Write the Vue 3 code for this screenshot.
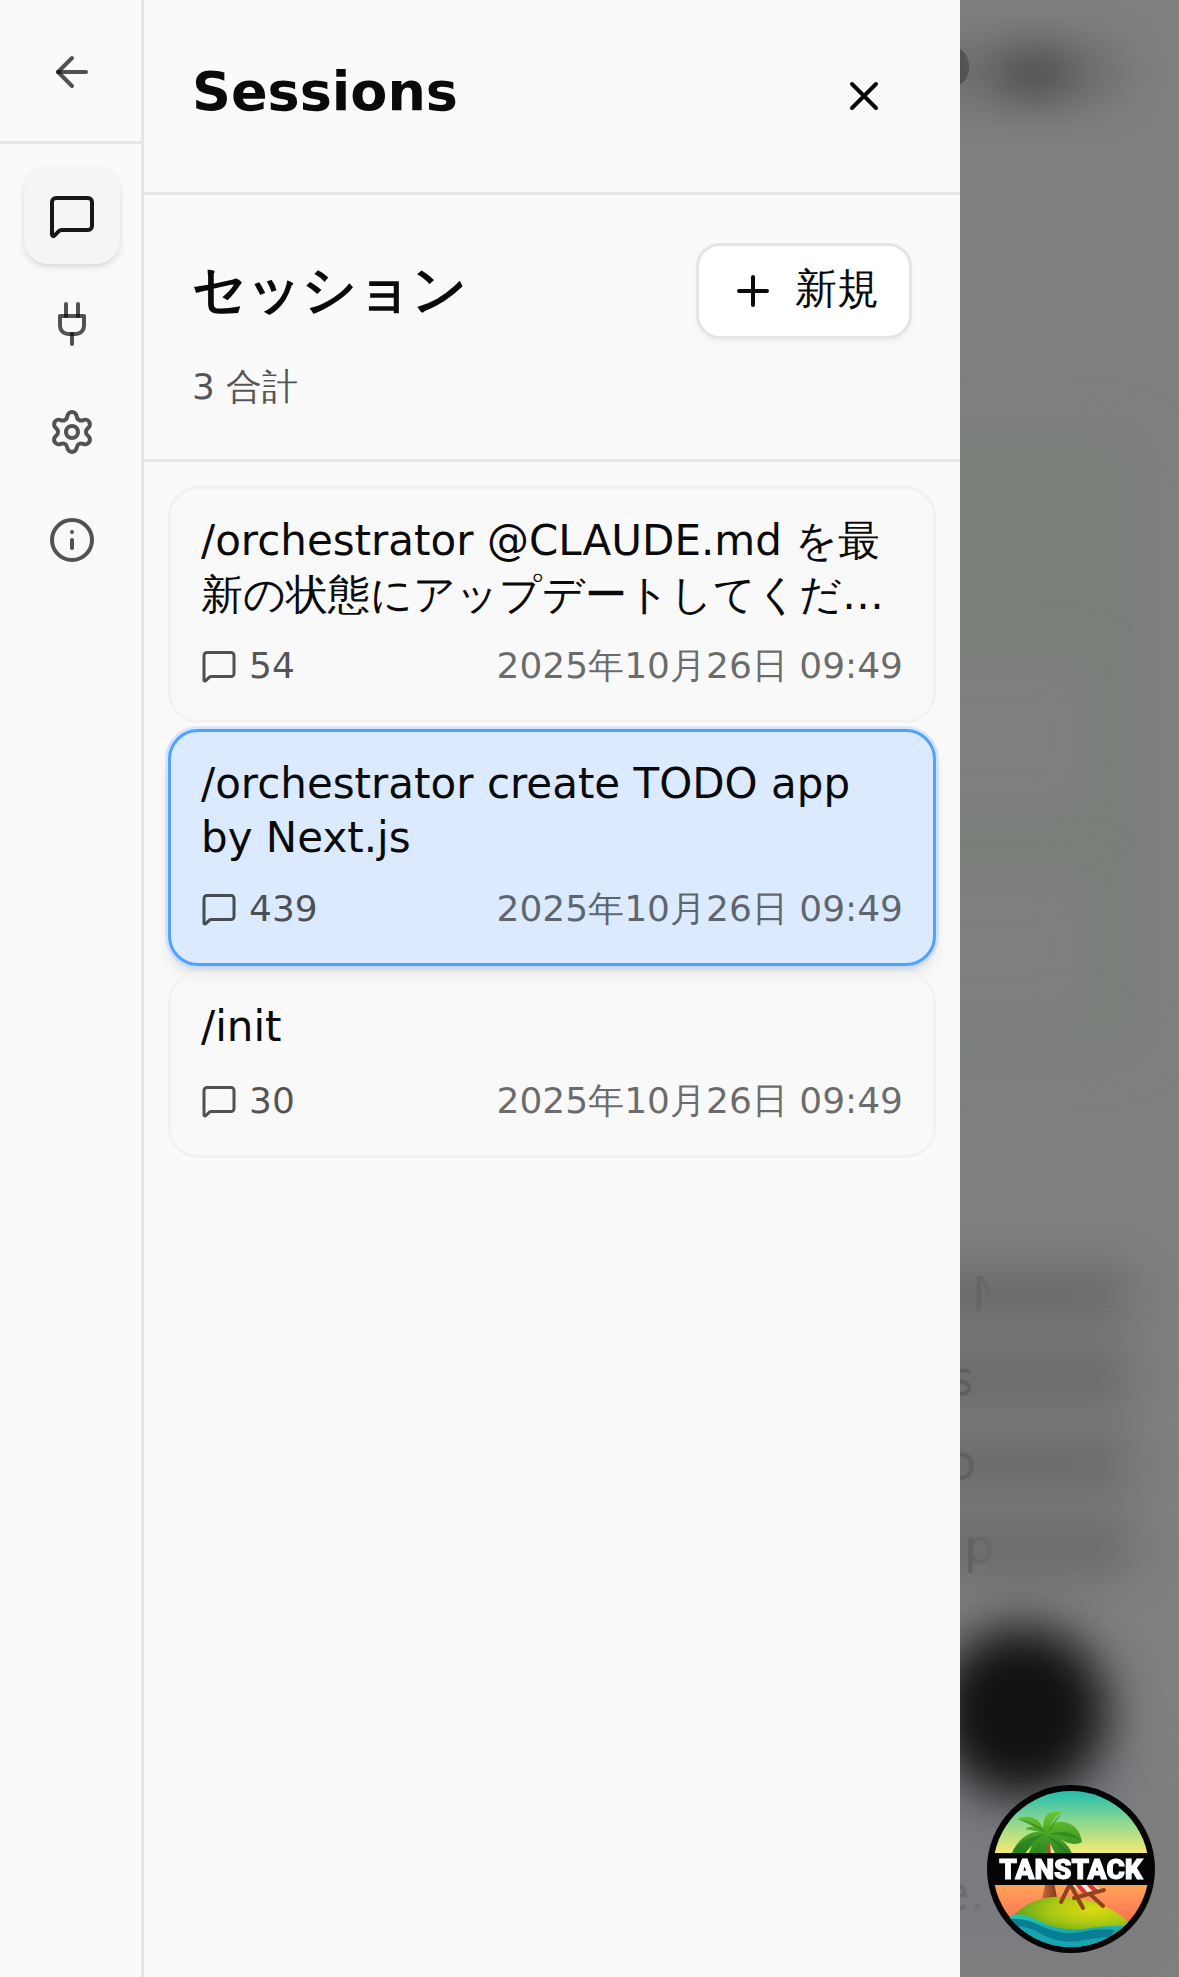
<script setup>
import { ref } from 'vue'

const bubble = 'M22 17a2 2 0 0 1-2 2H6.828a2 2 0 0 0-1.414.586l-2.202 2.202A.71.71 0 0 1 2 21.286V5a2 2 0 0 1 2-2h16a2 2 0 0 1 2 2z'

const tabs = [
  { id: 'sessions', label: 'Sessions', paths: [bubble] },
  {
    id: 'mcp',
    label: 'MCP',
    paths: ['M12 22v-5', 'M9 8V2', 'M15 8V2', 'M18 8v5a4 4 0 0 1-4 4h-4a4 4 0 0 1-4-4V8Z']
  },
  {
    id: 'settings',
    label: 'Settings',
    paths: [
      'M9.671 4.136a2.34 2.34 0 0 1 4.659 0 2.34 2.34 0 0 0 3.319 1.915 2.34 2.34 0 0 1 2.33 4.033 2.34 2.34 0 0 0 0 3.831 2.34 2.34 0 0 1-2.33 4.033 2.34 2.34 0 0 0-3.319 1.915 2.34 2.34 0 0 1-4.659 0 2.34 2.34 0 0 0-3.32-1.915 2.34 2.34 0 0 1-2.33-4.033 2.34 2.34 0 0 0 0-3.831A2.34 2.34 0 0 1 6.35 6.051a2.34 2.34 0 0 0 3.319-1.915',
      'M15 12a3 3 0 1 1-6 0 3 3 0 0 1 6 0Z'
    ]
  },
  {
    id: 'info',
    label: 'Info',
    paths: ['M22 12a10 10 0 1 1-20 0 10 10 0 0 1 20 0Z', 'M12 16v-4', 'M12 8h.01']
  }
]
const activeTab = ref('sessions')

const sessions = [
  { id: 1, title: '/orchestrator @CLAUDE.md を最新の状態にアップデートしてくだ…', count: 54, date: '2025年10月26日 09:49' },
  { id: 2, title: '/orchestrator create TODO app by Next.js', count: 439, date: '2025年10月26日 09:49' },
  { id: 3, title: '/init', count: 30, date: '2025年10月26日 09:49' }
]
const current = ref(2)
</script>

<template>
  <div class="app">
    <div class="drawer">
      <nav class="rail">
        <div class="rail-top">
          <a class="rail-btn" href="#" aria-label="Back">
            <svg class="icon" viewBox="0 0 24 24"><path d="m12 19-7-7 7-7" /><path d="M19 12H5" /></svg>
          </a>
        </div>
        <div class="rail-tabs">
          <button
            v-for="tab in tabs"
            :key="tab.id"
            type="button"
            class="rail-btn"
            :class="{ active: tab.id === activeTab }"
            :aria-label="tab.label"
            @click="activeTab = tab.id"
          >
            <svg class="icon" viewBox="0 0 24 24"><path v-for="d in tab.paths" :key="d" :d="d" /></svg>
          </button>
        </div>
      </nav>

      <section class="panel">
        <header class="panel-head">
          <h1>Sessions</h1>
          <button type="button" class="close" aria-label="Close">
            <svg class="icon" viewBox="0 0 24 24"><path d="M18 6 6 18M6 6l12 12" /></svg>
          </button>
        </header>

        <div class="summary">
          <div class="summary-row">
            <h2>セッション</h2>
            <button type="button" class="new">
              <svg class="icon" viewBox="0 0 24 24"><path d="M5 12h14M12 5v14" /></svg>
              <span>新規</span>
            </button>
          </div>
          <p class="total">3 合計</p>
        </div>

        <div class="list">
          <a
            v-for="s in sessions"
            :key="s.id"
            href="#"
            class="card"
            :class="{ selected: s.id === current }"
            @click.prevent="current = s.id"
          >
            <h3>{{ s.title }}</h3>
            <div class="meta">
              <span class="count">
                <svg class="icon small" viewBox="0 0 24 24"><path :d="bubble" /></svg>
                {{ s.count }}
              </span>
              <time>{{ s.date }}</time>
            </div>
          </a>
        </div>
      </section>
    </div>

    <div class="backdrop" aria-hidden="true">
      <div class="blob title-soft"></div>
      <div class="blob title-core"></div>
      <div class="blob green"></div>
      <div class="blob field field-a"></div>
      <div class="blob field field-b"></div>
      <div class="blob line line-a"></div>
      <div class="blob line line-b"></div>
      <div class="blob line line-c"></div>
      <div class="blob line line-d"></div>
      <div class="blob cool"></div>
      <div class="blob disc"></div>
      <div class="ghosts">
        <span class="ghost ghost-title">O</span>
        <span class="ghost ghost-a">N</span>
        <span class="ghost ghost-b">s</span>
        <span class="ghost ghost-c">o</span>
        <span class="ghost ghost-d">p</span>
        <span class="ghost ghost-e">e.</span>
      </div>
    </div>

    <button type="button" class="devtools" aria-label="TanStack Devtools">
      <svg viewBox="0 0 168 168">
        <defs>
          <linearGradient id="sky" x1="0" y1="0" x2="0" y2="1">
            <stop offset="0" stop-color="#22bdb0" />
            <stop offset=".5" stop-color="#8ed88e" />
            <stop offset="1" stop-color="#f8ea72" />
          </linearGradient>
          <linearGradient id="dusk" x1="0" y1="0" x2="0" y2="1">
            <stop offset="0" stop-color="#ffa65c" />
            <stop offset=".55" stop-color="#ff7050" />
            <stop offset="1" stop-color="#ff6a55" />
          </linearGradient>
          <radialGradient id="sand" cx=".68" cy=".3" r=".7">
            <stop offset="0" stop-color="#dcdc10" />
            <stop offset=".5" stop-color="#a9c714" />
            <stop offset="1" stop-color="#4e9c1c" />
          </radialGradient>
          <linearGradient id="leaf" x1="0" y1="0" x2="0" y2="1">
            <stop offset="0" stop-color="#6cc62c" />
            <stop offset="1" stop-color="#23801f" />
          </linearGradient>
          <linearGradient id="trunk" x1="0" y1="0" x2="1" y2="0">
            <stop offset="0" stop-color="#c8693a" />
            <stop offset="1" stop-color="#843818" />
          </linearGradient>
          <linearGradient id="sea" x1="0" y1="0" x2="0" y2="1">
            <stop offset="0" stop-color="#25c5bb" />
            <stop offset="1" stop-color="#087f96" />
          </linearGradient>
          <clipPath id="round"><circle cx="84" cy="84" r="78" /></clipPath>
        </defs>
        <circle cx="84" cy="84" r="84" fill="#050505" />
        <g clip-path="url(#round)">
          <path d="M0 6h168v63H0z" fill="url(#sky)" />
          <path d="M0 99h168v69H0z" fill="url(#dusk)" />
          <path d="M57 55q7 28-2 58h15q-6-30-7-58z" fill="url(#trunk)" />
          <path d="M22 135q22-25 54-23 42 2 68 27l-30 15H40z" fill="url(#sand)" />
          <path d="M16 132q16-6 32 2 25 13 48 10 22-4 44-3l-10 30H30z" fill="url(#sea)" />
          <path d="M20 134q18-2 34 7 20 10 40 6 18-4 34-2l-14 20H40z" fill="#087d93" />
          <path d="M30 141q14 1 26 9 20 10 42 5l22-3-12 16-50-1z" fill="#16a6b0" />
          <path d="M59 48C48 44 32 50 24 70v4h12q1-6 9-13l-6 13h19l4-18 9 18h15q-1-12-13-20 13 8 22 3-3-18-19-20-9-1-13 5 4-11 12-15-19-3-19 16-8-16-26-9 12 3 17 8-6-1-9 2z" fill="url(#leaf)" />
          <path d="M31 34q17 3 29 14-12-6-29-14zM26 66q10-14 32-17Q42 58 36 71zM61 48q3-12 14-19-8 9-14 19zM62 49q20-6 32 6-17-5-32-6zM60 51q15 6 23 20-14-12-23-20zM58 51q-7 8-9 20 0-12 9-20z" fill="#1b7420" opacity=".5" />
          <path d="M82 97h20l15 9-18 6z" fill="#f6e6dc" />
          <path d="M86 97h5l12 13-5 2zM97 97h6l10 10-5 2z" fill="#e33a2c" />
          <path d="M83 99 74 117M83 99l13 24M117 105l-30 8M104 110l12 11" fill="none" stroke="#91441a" stroke-width="4" stroke-linecap="round" />
        </g>
        <path d="M4 68h160v32H4z" fill="#050505" />
        <text class="wordmark" x="84" y="94" text-anchor="middle">TANSTACK</text>
      </svg>
    </button>
  </div>
</template>

<style>
body {
  margin: 0;
  background: #7f7f7f;
}
</style>

<style scoped>
.app {
  display: flex;
  min-height: 100vh;
  color: #0a0a0a;
  font-family: 'DejaVu Sans', sans-serif;
}
.app *,
.app *::before {
  box-sizing: border-box;
}
h1,
h2,
h3,
p {
  margin: 0;
}
button {
  padding: 0;
  border: 0;
  background: none;
  color: inherit;
  font: inherit;
  cursor: pointer;
}
a {
  color: inherit;
  text-decoration: none;
}
.icon {
  width: 48px;
  height: 48px;
  flex: none;
  fill: none;
  stroke: currentColor;
  stroke-width: 2;
  stroke-linecap: round;
  stroke-linejoin: round;
}
.icon.small {
  width: 36px;
  height: 36px;
}
.drawer {
  display: flex;
  flex: 0 1 960px;
  min-width: 0;
  background: #fafafa;
}

/* Icon rail */
.rail {
  flex: none;
  width: 144px;
  border-right: 3px solid #e5e5e5;
}
.rail-top {
  padding: 24px 24px 21px;
  border-bottom: 3px solid #e5e5e5;
}
.rail-tabs {
  display: flex;
  flex-direction: column;
  gap: 12px;
  padding: 24px;
}
.rail-btn {
  display: flex;
  align-items: center;
  justify-content: center;
  width: 96px;
  height: 96px;
  border-radius: 24px;
  color: rgba(10, 10, 10, 0.7);
}
.rail-btn.active {
  background: #f5f5f5;
  color: #171717;
  box-shadow: 0 3px 9px rgba(0, 0, 0, 0.1), 0 3px 6px -3px rgba(0, 0, 0, 0.1);
}

/* Session panel */
.panel {
  flex: 1;
  min-width: 0;
}
.panel-head {
  display: flex;
  align-items: center;
  justify-content: space-between;
  padding: 48px;
  border-bottom: 3px solid #e5e5e5;
}
h1 {
  padding-bottom: 8px;
  font-size: 54px;
  line-height: 54px;
}
.close {
  display: flex;
  align-items: center;
  justify-content: center;
  width: 96px;
  height: 96px;
}
.summary {
  padding: 48px;
  border-bottom: 3px solid #e5e5e5;
}
.summary-row {
  display: flex;
  align-items: center;
  justify-content: space-between;
}
h2 {
  padding-bottom: 2px;
  font-size: 54px;
  line-height: 84px;
}
.new {
  display: flex;
  align-items: center;
  gap: 18px;
  height: 96px;
  padding: 0 30px;
  border: 3px solid #e5e5e5;
  border-radius: 24px;
  background: #fff;
  font-size: 42px;
  line-height: 60px;
  box-shadow: 0 3px 6px rgba(0, 0, 0, 0.05);
}
.new span {
  padding-bottom: 4px;
}
.total {
  margin-top: 24px;
  font-size: 36px;
  line-height: 48px;
  color: rgba(10, 10, 10, 0.7);
}
.list {
  display: flex;
  flex-direction: column;
  gap: 6px;
  padding: 24px;
}
.card {
  display: block;
  padding: 25px 30px 30px;
  border: 3px solid #f2f2f2;
  border-radius: 30px;
  background: rgba(248, 248, 248, 0.5);
}
.card.selected {
  border-color: #51a2ff;
  background: #dbeafe;
  box-shadow: 0 0 0 3px rgba(190, 219, 255, 0.6), 0 12px 18px -3px rgba(0, 0, 0, 0.1), 0 6px 12px -6px rgba(0, 0, 0, 0.1);
}
h3 {
  min-height: 57px;
  margin-bottom: 20px;
  font-size: 42px;
  font-weight: 400;
  line-height: 54px;
}
.meta {
  display: flex;
  align-items: center;
  justify-content: space-between;
  font-size: 36px;
  line-height: 48px;
  color: rgba(10, 10, 10, 0.7);
}
.count {
  display: flex;
  align-items: center;
  gap: 12px;
}
time {
  color: rgba(10, 10, 10, 0.6);
}

/* Dimmed, blurred page behind the drawer */
.backdrop {
  position: relative;
  flex: 1;
  overflow: hidden;
  background: #7f7f7f;
}
.blob {
  position: absolute;
}
.title-soft {
  left: -60px;
  top: 48px;
  width: 220px;
  height: 48px;
  background: #5c5c5c;
  opacity: 0.6;
  filter: blur(24px);
}
.title-core {
  left: 36px;
  top: 50px;
  width: 78px;
  height: 48px;
  border-radius: 24px;
  background: #3c3c3c;
  opacity: 0.6;
  filter: blur(20px);
}
.green {
  left: -60px;
  top: 436px;
  width: 240px;
  height: 616px;
  border-radius: 30px;
  background: #797f79;
  filter: blur(24px);
}
.field {
  left: -60px;
  width: 190px;
  background: #807f7f;
  filter: blur(24px);
}
.field-a {
  top: 662px;
  height: 150px;
}
.field-b {
  top: 872px;
  height: 150px;
}
.line {
  left: -60px;
  width: 230px;
  height: 48px;
  background: #5c5c5c;
  opacity: 0.7;
  filter: blur(24px);
}
.line-a {
  top: 1272px;
}
.line-b {
  top: 1354px;
}
.line-c {
  top: 1440px;
}
.line-d {
  top: 1524px;
}
.cool {
  left: -60px;
  top: 1750px;
  width: 240px;
  height: 200px;
  background: #7a7b80;
  filter: blur(20px);
}
.disc {
  left: -24px;
  top: 1626px;
  width: 172px;
  height: 172px;
  border-radius: 50%;
  background: #111;
  filter: blur(24px);
}
.ghosts {
  position: absolute;
  inset: 0;
  -webkit-mask-image: linear-gradient(to right, #000, transparent 36px);
  mask-image: linear-gradient(to right, #000, transparent 36px);
}
.ghost {
  position: absolute;
  color: #5c5c5c;
  font-size: 48px;
  line-height: 60px;
}
.ghost-title {
  left: -34px;
  top: 38px;
  color: #505050;
  font-size: 54px;
  font-weight: 700;
}
.ghost-a {
  left: 12px;
  top: 1264px;
}
.ghost-b {
  left: -11px;
  top: 1348px;
}
.ghost-c {
  left: -13px;
  top: 1432px;
}
.ghost-d {
  left: 4px;
  top: 1516px;
}
.ghost-e {
  left: -20px;
  top: 1863px;
  color: #6a6b6e;
}
.devtools {
  position: fixed;
  right: 24px;
  bottom: 24px;
  width: 168px;
  height: 168px;
}
.devtools svg {
  display: block;
}
.wordmark {
  fill: #fff;
  stroke: #fff;
  stroke-width: 1;
  font-family: Roboto, 'Liberation Sans', sans-serif;
  font-size: 28px;
  font-weight: 900;
}
</style>
